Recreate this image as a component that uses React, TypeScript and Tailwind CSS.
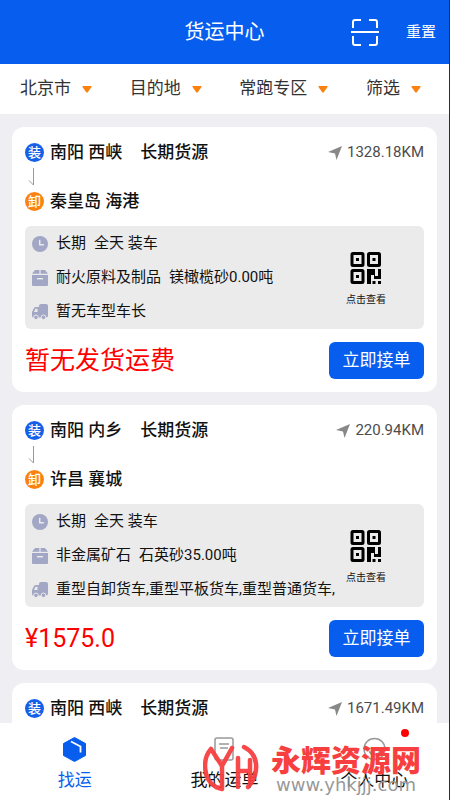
import { useState } from 'react';

const cargoList = [
  {
    id: 1,
    from: '南阳 西峡',
    to: '秦皇岛 海港',
    distance: '1328.18KM',
    time: ['长期', '全天 装车'],
    goods: ['耐火原料及制品', '镁橄榄砂0.00吨'],
    truck: '暂无车型车长',
    price: '暂无发货运费',
  },
  {
    id: 2,
    from: '南阳 内乡',
    to: '许昌 襄城',
    distance: '220.94KM',
    time: ['长期', '全天 装车'],
    goods: ['非金属矿石', '石英砂35.00吨'],
    truck: '重型自卸货车,重型平板货车,重型普通货车,',
    price: '¥1575.0',
  },
  {
    id: 3,
    from: '南阳 西峡',
    to: '秦皇岛 海港',
    distance: '1671.49KM',
    time: ['长期', '全天 装车'],
    goods: ['耐火原料及制品', '镁橄榄砂0.00吨'],
    truck: '暂无车型车长',
    price: '暂无发货运费',
  },
];

const filters = ['北京市', '目的地', '常跑专区', '筛选'];

function ScanIcon() {
  return (
    <svg className="h-7 w-7" viewBox="0 0 28 28" fill="none" stroke="white" strokeWidth="2">
      <path d="M2 10V4a2 2 0 0 1 2-2h6M18 2h6a2 2 0 0 1 2 2v6M26 18v7a2 2 0 0 1-2 2h-6M10 27H4a2 2 0 0 1-2-2v-7" />
      <path d="M0 14h28" />
    </svg>
  );
}

function ClockIcon() {
  return (
    <svg className="h-4 w-4 shrink-0" viewBox="0 0 16 16">
      <circle cx="8" cy="8" r="8" fill="#a1a7c4" />
      <path d="M7.7 3.8v5h4.2" fill="none" stroke="#ebebeb" strokeWidth="1.5" />
    </svg>
  );
}

function BoxIcon() {
  return (
    <svg className="h-4 w-4 shrink-0" viewBox="0 0 16 16" fill="#a1a7c4">
      <path d="M3 0h4.4v3.8H0zM8.6 0H13l3 3.8H8.6zM0 5h16v10a1 1 0 0 1-1 1H1a1 1 0 0 1-1-1z" />
      <path d="M5 8.7h6" stroke="#ebebeb" strokeWidth="1.4" />
    </svg>
  );
}

function TruckIcon() {
  return (
    <svg className="h-4 w-4 shrink-0" viewBox="0 0 16 16" fill="#a1a7c4">
      <path d="M7 2a2 2 0 0 1 2-2h5a2 2 0 0 1 2 2v9.5a2 2 0 0 1-2 2H1.5A1.5 1.5 0 0 1 0 12V8l2-4a2 2 0 0 1 1.7-1H7z" />
      <path d="M3.5 4.8h2V8H2z" fill="#ebebeb" />
      <g stroke="#ebebeb">
        <circle cx="4" cy="13.3" r="2.3" />
        <circle cx="11.5" cy="13.3" r="2.3" />
      </g>
    </svg>
  );
}

function QrIcon() {
  return (
    <svg className="h-8 w-8" viewBox="0 0 32 32">
      <g fill="none" stroke="black" strokeWidth="3">
        <rect x="2" y="1.5" width="11" height="12" rx="1" />
        <rect x="18.5" y="1.5" width="11" height="12" rx="1" />
        <rect x="2" y="18.5" width="11" height="12" rx="1" />
      </g>
      <path d="M6 6h3v3H6zM22.5 6h3v3h-3zM6 23h3v3H6zM17 17h8v7h3v-7h3v10h-7v-4h-3v9h-4zM22.5 29h3v3h-3zM28 29h3v3h-3z" />
    </svg>
  );
}

function CargoCard({ cargo }: { cargo: (typeof cargoList)[number] }) {
  return (
    <article className="shrink-0 rounded-xl bg-white p-[13px]">
      <div className="flex h-[25px] items-center">
        <span className="flex h-[19px] w-[19px] items-center justify-center rounded-full bg-[#1660e8] text-[13px] font-medium text-white">
          装
        </span>
        <h2 className="ml-[6px] text-[17px] font-medium">{cargo.from}</h2>
        <span className="ml-[18px] text-[17px] font-medium">长期货源</span>
        <span className="ml-auto flex items-center gap-[5px] text-[15px] text-[#4c4c4c]">
          <svg className="h-[14px] w-[14px]" viewBox="0 0 14 14" fill="#888888">
            <path d="M14 0 8.5 14 7 7.5 0 6z" />
          </svg>
          {cargo.distance}
        </span>
      </div>
      <div className="flex h-6 items-center pl-[3px]">
        <svg className="h-[18px] w-[6px]" viewBox="0 0 6 18" fill="none" stroke="#999999">
          <path d="M5.5 0v17L1 12.5" />
        </svg>
      </div>
      <div className="flex h-[25px] items-center">
        <span className="flex h-[19px] w-[19px] items-center justify-center rounded-full bg-[#fb8211] text-[13px] font-medium text-white">
          卸
        </span>
        <h2 className="ml-[6px] text-[17px] font-medium">{cargo.to}</h2>
      </div>

      <div className="mt-3 flex h-[103px] items-center rounded-md bg-[#ebebeb] pl-[7px]">
        <div className="flex min-w-0 flex-1 flex-col text-[15px]">
          <p className="flex h-[34px] items-center gap-2">
            <ClockIcon />
            {cargo.time.map((part) => (
              <span key={part}>{part}</span>
            ))}
          </p>
          <p className="flex h-[34px] items-center gap-2">
            <BoxIcon />
            {cargo.goods.map((part) => (
              <span key={part}>{part}</span>
            ))}
          </p>
          <p className="flex h-[34px] items-center gap-2">
            <TruckIcon />
            <span className="whitespace-nowrap">{cargo.truck}</span>
          </p>
        </div>
        <button type="button" className="mr-[38px] flex flex-col items-center gap-2 pt-1 text-[10px]">
          <QrIcon />
          点击查看
        </button>
      </div>

      <div className="mt-[13px] flex items-center justify-between">
        <strong className="text-[25px] leading-none font-normal text-[#ff0000]">{cargo.price}</strong>
        <button type="button" className="h-[37px] w-[95px] rounded-md bg-[#075eee] text-[17px] text-white">
          立即接单
        </button>
      </div>
    </article>
  );
}

function Watermark() {
  return (
    <div className="pointer-events-none absolute right-7 bottom-[6px] flex items-center gap-3">
      <svg
        className="h-[50px] w-[56px]"
        viewBox="0 0 56 50"
        fill="none"
        stroke="#f83f40"
        strokeOpacity="0.95"
        strokeWidth="4.5"
        strokeLinecap="round"
        strokeLinejoin="round"
      >
        <path d="M8 5C-1 15 0 36 13 43l6 2V22L8 5M19 22 29 4" />
        <path d="M35 14v29M35 27h12M47 16v22M41 3c16 8 15 28 4 40" />
      </svg>
      <div className="flex flex-col items-center">
        <span className="text-3xl leading-8 font-black text-[#f83f40]">永辉资源网</span>
        <span className="font-[family-name:'DejaVu_Sans',sans-serif] text-lg leading-4 text-[#999999]">
          www.yhkjjj.com
        </span>
      </div>
    </div>
  );
}

function App() {
  const [tab, setTab] = useState('find');

  return (
    <div className="relative flex h-screen flex-col overflow-hidden border-r border-[#2b2b40] bg-[#efeef2] font-[Roboto,'Noto_Sans_CJK_SC',sans-serif] text-[#111111]">
      <header className="grid h-16 shrink-0 grid-cols-[1fr_auto_1fr] items-center bg-[#075eee] px-[13px] text-white">
        <h1 className="col-start-2 text-xl">货运中心</h1>
        <div className="flex items-center justify-end gap-[27px]">
          <button type="button" aria-label="扫一扫">
            <ScanIcon />
          </button>
          <button type="button" className="text-[15px]">
            重置
          </button>
        </div>
      </header>

      <div className="flex h-[50px] shrink-0 items-center justify-between bg-white pr-7 pl-5 text-[17px] text-[#333333]">
        {filters.map((label) => (
          <button key={label} type="button" className="flex items-center gap-[11px]">
            {label}
            <svg className="h-[7px] w-[10px]" viewBox="0 0 10 7" fill="#fb8211">
              <path d="M1 0h8q1 0 .5 1L5.8 6.3q-.8.9-1.6 0L.5 1Q0 0 1 0" />
            </svg>
          </button>
        ))}
      </div>

      <main className="flex min-h-0 flex-1 flex-col gap-[13px] overflow-y-auto px-3 pt-[13px] [scrollbar-width:none]">
        {cargoList.map((cargo) => (
          <CargoCard key={cargo.id} cargo={cargo} />
        ))}
      </main>

      <nav className="grid h-[77px] shrink-0 grid-cols-3 bg-white text-[17px]">
        <button
          type="button"
          onClick={() => setTab('find')}
          className={`flex flex-col items-center gap-[6px] pt-[14px] ${tab === 'find' ? 'text-[#075eee]' : ''}`}
        >
          <svg className="h-[25px] w-[23px]" viewBox="0 0 23 25">
            <path d="m11.5.5 11 6v12l-11 6-11-6v-12z" fill="#075eee" stroke="#075eee" strokeLinejoin="round" />
            <path d="m8 4.5 9.500 5v6" fill="none" stroke="white" strokeWidth="1.8" />
          </svg>
          找运
        </button>
        <button
          type="button"
          onClick={() => setTab('orders')}
          className={`flex flex-col items-center gap-[6px] pt-[14px] ${tab === 'orders' ? 'text-[#075eee]' : ''}`}
        >
          <svg className="h-[25px] w-5" viewBox="0 0 20 25" fill="none" stroke="#999999" strokeWidth="1.5">
            <rect x="1" y="1" width="18" height="22" rx="2" />
            <path d="M5 7h10M6 11h8" />
          </svg>
          我的运单
        </button>
        <button
          type="button"
          onClick={() => setTab('me')}
          className={`relative flex flex-col items-center gap-[6px] pt-[14px] ${tab === 'me' ? 'text-[#075eee]' : ''}`}
        >
          <svg className="h-[25px] w-[23px]" viewBox="0 0 23 25" fill="none" stroke="#999999" strokeWidth="1.5">
            <circle cx="11.5" cy="12" r="10.5" />
            <path d="M6.5 14c1 5 9 5 10 0" />
          </svg>
          个人中心
          <span className="absolute top-[6px] right-10 h-2 w-2 rounded-full bg-[#ff0000]" />
        </button>
      </nav>
      <Watermark />
    </div>
  );
}

export default App;
